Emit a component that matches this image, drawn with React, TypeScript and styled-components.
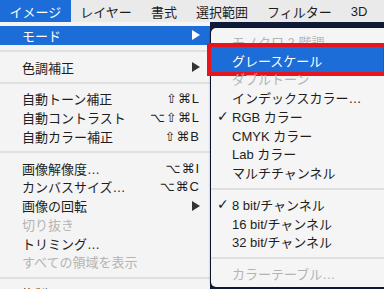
import React from 'react';
import styled, { createGlobalStyle } from 'styled-components';

const GlobalStyle = createGlobalStyle`
  html, body {
    margin: 0;
    padding: 0;
    background: #0e1a38;
  }
  body {
    width: 384px;
    height: 289px;
    overflow: hidden;
    font-family: "Liberation Sans", "Noto Sans CJK JP", sans-serif;
    -webkit-font-smoothing: antialiased;
  }
`;

const BLUE = '#1c6dd8';

const Screen = styled.div`
    width: 384px;
    height: 289px;
    display: flex;
    flex-direction: column;
    overflow: hidden;
`;

const MenuBar = styled.div`
    height: 22px;
    flex: none;
    display: flex;
    align-items: stretch;
    background: #eaeaea;
    overflow: hidden;
`;

const BarItem = styled.div<{ $active?: boolean }>`
    flex: none;
    display: flex;
    align-items: center;
    white-space: nowrap;
    padding: 0 9.5px;
    font-size: 13px;
    color: ${p => p.$active ? '#fff' : '#1e1e1e'};
    background: ${p => p.$active ? BLUE : 'transparent'};
`;

const Body = styled.div`
    flex: 1;
    display: flex;
    min-height: 0;
`;

const MainMenu = styled.div`
    width: 210px;
    flex: none;
    background: #f4f4f4;
    padding-top: 4px;
    overflow: hidden;
`;

const SubMenu = styled.div`
    flex: 1;
    margin: 6px 0 2px 1px;
    background: #f5f5f5;
    border-radius: 5px 0 0 5px;
    padding-top: 4px;
    box-shadow: -1px 0 2px rgba(0, 0, 0, 0.3);
`;

const Row = styled.div<{ $active?: boolean; $disabled?: boolean }>`
    height: 18.75px;
    display: flex;
    align-items: center;
    padding: 0 10px 0 22px;
    font-size: 13px;
    white-space: nowrap;
    color: ${p => p.$active ? '#fff' : p.$disabled ? '#b4b4b4' : '#1e1e1e'};
    background: ${p => p.$active ? BLUE : 'transparent'};
`;

const Separator = styled.div`
    height: 13px;
    display: flex;
    align-items: center;
    &::after {
        content: '';
        flex: 1;
        height: 2px;
        background: #e0e0e0;
    }
`;

const Shortcut = styled.span`
    margin-left: auto;
    font-family: "Liberation Sans", "DejaVu Sans", sans-serif;
    font-size: 13px;
    letter-spacing: 1px;
`;

const Arrow = styled.span<{ $light?: boolean }>`
    margin-left: auto;
    width: 0;
    height: 0;
    border-top: 5px solid transparent;
    border-bottom: 5px solid transparent;
    border-left: 8px solid ${p => p.$light ? '#fff' : '#333'};
`;

const SubRow = styled.div<{ $selected?: boolean; $disabled?: boolean }>`
    position: relative;
    height: 18.75px;
    display: flex;
    align-items: center;
    padding-left: 6px;
    font-size: 13px;
    white-space: nowrap;
    color: ${p => p.$selected ? '#fff' : p.$disabled ? '#b4b4b4' : '#1e1e1e'};
    background: ${p => p.$selected ? BLUE : 'transparent'};
    ${p => p.$selected && `
        &::after {
            content: '';
            position: absolute;
            top: -7.75px;
            bottom: -6.5px;
            left: -4px;
            right: -3px;
            border: 4px solid #e6141c;
            box-shadow: inset 0 0 0 4px ${BLUE};
        }
    `}
`;

const Check = styled.span`
    width: 15px;
    flex: none;
    font-family: "DejaVu Sans", sans-serif;
    font-size: 14px;
    font-weight: bold;
`;

type MenuEntry =
    | { sep: true }
    | { label: string; shortcut?: string; arrow?: boolean; active?: boolean; disabled?: boolean };

const mainItems: MenuEntry[] = [
    { label: 'モード', arrow: true, active: true },
    { sep: true },
    { label: '色調補正', arrow: true },
    { sep: true },
    { label: '自動トーン補正', shortcut: '⇧⌘L' },
    { label: '自動コントラスト', shortcut: '⌥⇧⌘L' },
    { label: '自動カラー補正', shortcut: '⇧⌘B' },
    { sep: true },
    { label: '画像解像度…', shortcut: '⌥⌘I' },
    { label: 'カンバスサイズ…', shortcut: '⌥⌘C' },
    { label: '画像の回転', arrow: true },
    { label: '切り抜き', disabled: true },
    { label: 'トリミング…' },
    { label: 'すべての領域を表示', disabled: true },
    { sep: true },
    { label: '複製…' },
];

type SubEntry =
    | { sep: true }
    | { label: string; checked?: boolean; selected?: boolean; disabled?: boolean };

const modeItems: SubEntry[] = [
    { label: 'モノクロ 2 階調', disabled: true },
    { label: 'グレースケール', selected: true },
    { label: 'ダブルトーン', disabled: true },
    { label: 'インデックスカラー…' },
    { label: 'RGB カラー', checked: true },
    { label: 'CMYK カラー' },
    { label: 'Lab カラー' },
    { label: 'マルチチャンネル' },
    { sep: true },
    { label: '8 bit/チャンネル', checked: true },
    { label: '16 bit/チャンネル' },
    { label: '32 bit/チャンネル' },
    { sep: true },
    { label: 'カラーテーブル…', disabled: true },
];

const barItems = ['イメージ', 'レイヤー', '書式', '選択範囲', 'フィルター', '3D'];

export default function App() {
    return (
        <Screen>
            <GlobalStyle />
            <MenuBar>
                {barItems.map((b, i) => (
                    <BarItem key={b} $active={i === 0}>{b}</BarItem>
                ))}
            </MenuBar>
            <Body>
                <MainMenu>
                    {mainItems.map((it, i) => 'sep' in it ? <Separator key={i} /> : (
                        <Row key={i} $active={it.active} $disabled={it.disabled}>
                            {it.label}
                            {it.shortcut && <Shortcut>{it.shortcut}</Shortcut>}
                            {it.arrow && <Arrow $light={it.active} />}
                        </Row>
                    ))}
                </MainMenu>
                <SubMenu>
                    {modeItems.map((it, i) => 'sep' in it ? <Separator key={i} /> : (
                        <SubRow key={i} $selected={it.selected} $disabled={it.disabled}>
                            <Check>{it.checked ? '✓' : ''}</Check>
                            {it.label}
                        </SubRow>
                    ))}
                </SubMenu>
            </Body>
        </Screen>
    );
}
